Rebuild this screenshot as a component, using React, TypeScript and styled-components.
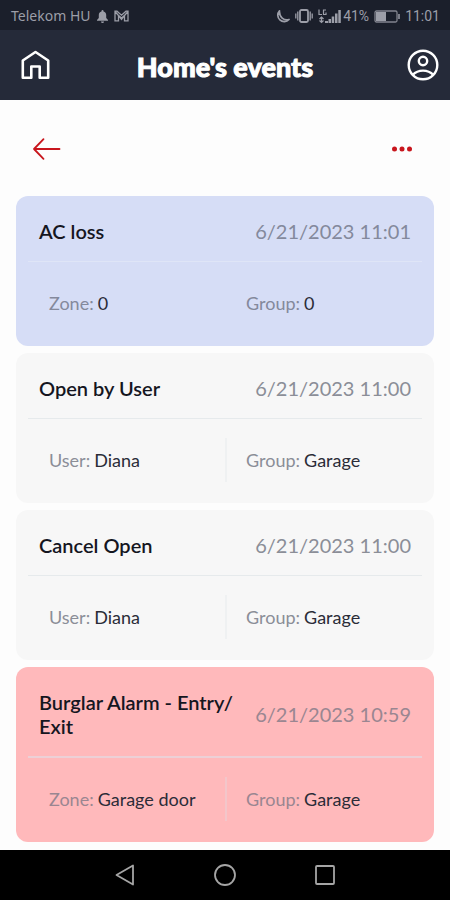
import React from 'react';
import styled, { createGlobalStyle } from 'styled-components';

const GlobalStyle = createGlobalStyle`
  *, *::before, *::after { box-sizing: border-box; }
  body {
    margin: 0;
    background: #fdfdfd;
    color: #15161f;
    font-family: Lato, sans-serif;
  }
  button {
    display: flex;
    margin: 0;
    padding: 0;
    border: 0;
    background: none;
    color: inherit;
    font: inherit;
    cursor: pointer;
  }
  svg { display: block; flex: none; }
`;

type Tone = 'info' | 'plain' | 'alarm';

const tones: Record<Tone, { background: string; rule: string; divider: string; label: string }> = {
  info: { background: '#d6ddf6', rule: '#dfe5f7', divider: 'transparent', label: '#84899c' },
  plain: { background: '#f7f7f7', rule: '#e6eaec', divider: '#eff1f2', label: '#8b8e97' },
  alarm: { background: '#ffb9bb', rule: '#ecd0d6', divider: '#f3c6ca', label: '#9a8691' },
};

const Screen = styled.div`
  display: flex;
  flex-direction: column;
  min-height: 100vh;
`;

const StatusBar = styled.div`
  display: flex;
  align-items: center;
  justify-content: space-between;
  height: 30px;
  padding: 2px 10px 0 11px;
  background: #1b1f2b;
  color: #9c9ea8;
  font-family: Roboto, sans-serif;
  font-size: 14px;
  line-height: 20px;
`;

const Carrier = styled.div`
  display: flex;
  align-items: center;
  gap: 6px;
  font-family: "Noto Sans", sans-serif;
`;

const Indicators = styled.div`
  display: flex;
  align-items: center;
  gap: 5px;
`;

const Signal = styled.div`
  display: flex;
  align-items: center;
  gap: 2px;
`;

const AppBar = styled.header`
  display: grid;
  grid-template-columns: 42px 1fr 42px;
  align-items: center;
  justify-items: end;
  height: 70px;
  padding: 0 10px;
  background: #252a39;
  color: #fff;
`;

const AppTitle = styled.h1`
  justify-self: center;
  margin: 0;
  padding-top: 3px;
  font-size: 27px;
  font-weight: 900;
  line-height: 32px;
  -webkit-text-stroke: 1px currentColor;
`;

const Main = styled.main`
  flex: 1;
  padding: 0 16px 8px;
`;

const Toolbar = styled.div`
  display: flex;
  align-items: center;
  justify-content: space-between;
  height: 96px;
  padding: 2px 21px 0 16px;
  color: #c8161d;
`;

const EventList = styled.ul`
  display: flex;
  flex-direction: column;
  gap: 7px;
  margin: 0;
  padding: 0;
  list-style: none;
`;

const EventCard = styled.li<{ $tone: Tone }>`
  padding: 0 12px;
  border-radius: 12px;
  background: ${({ $tone }) => tones[$tone].background};
`;

const EventHead = styled.div<{ $tone: Tone }>`
  display: flex;
  align-items: center;
  justify-content: space-between;
  gap: 16px;
  padding: 23px 11px 18px;
  border-bottom: ${({ $tone }) => ($tone === 'alarm' ? 2 : 1)}px solid ${({ $tone }) => tones[$tone].rule};
`;

const EventTitle = styled.h2`
  margin: 0;
  font-size: 20px;
  font-weight: 600;
  line-height: 24px;
`;

const EventTime = styled.time<{ $tone: Tone }>`
  flex: none;
  color: ${({ $tone }) => tones[$tone].label};
  font-size: 20px;
  line-height: 24px;
`;

const Details = styled.dl`
  display: grid;
  grid-template-columns: 1fr 1fr;
  align-items: center;
  height: 84px;
  margin: 0;
  padding-bottom: 2px;
`;

const Detail = styled.div<{ $tone: Tone; $divided?: boolean }>`
  display: flex;
  align-items: center;
  gap: 4px;
  height: 44px;
  padding-left: 19px;
  border-left: 2px solid ${({ $tone, $divided }) => ($divided ? tones[$tone].divider : 'transparent')};
  font-size: 18px;
  line-height: 24px;

  dt { color: ${({ $tone }) => tones[$tone].label}; }
  dd { margin: 0; color: #2b2c38; }
`;

const NavBar = styled.nav`
  display: flex;
  align-items: center;
  justify-content: center;
  gap: 76px;
  height: 50px;
  background: #000;
  color: #a5a5a5;
`;

interface AlarmEvent {
  title: string;
  time: string;
  source: [string, string];
  group: string;
  tone: Tone;
}

const events: AlarmEvent[] = [
  { title: 'AC loss', time: '6/21/2023 11:01', source: ['Zone', '0'], group: '0', tone: 'info' },
  { title: 'Open by User', time: '6/21/2023 11:00', source: ['User', 'Diana'], group: 'Garage', tone: 'plain' },
  { title: 'Cancel Open', time: '6/21/2023 11:00', source: ['User', 'Diana'], group: 'Garage', tone: 'plain' },
  { title: 'Burglar Alarm - Entry/\u200bExit', time: '6/21/2023 10:59', source: ['Zone', 'Garage door'], group: 'Garage', tone: 'alarm' },
];

const BellIcon = () => (
  <svg width="11" height="13" viewBox="0 0 11 13" fill="currentColor">
    <path d="M5.500 0a1 1 0 0 1 1 1v.5C8.300 2 9.200 3.300 9.200 5v3L11 10v.8H0V10l1.800-2V5c0-1.700.9-3 2.700-3.500V1a1 1 0 0 1 1-1zM4 11.500h3a1.500 1.500 0 0 1-3 0z" />
  </svg>
);

const MailIcon = () => (
  <svg width="15" height="12" viewBox="0 0 15 12" fill="none" stroke="currentColor" strokeWidth="1.300">
    <path d="M4.500 10.800H1V1.200h2l4.500 4 4.500-4h2v9.600h-3.500V5.500L7.500 8 4.500 5.500zM1 1.500l3.500 4M14 1.500l-3.500 4M4.500 5.500l3 4 3-4" />
  </svg>
);

const MoonIcon = () => (
  <svg width="15" height="15" viewBox="0 0 15 15" fill="none" stroke="currentColor" strokeWidth="1.700" strokeLinejoin="round">
    <path d="M4.500 1.800A6.300 6.300 0 1 0 14 10.500C9 12 4 8 4.500 1.800z" />
  </svg>
);

const VibrateIcon = () => (
  <svg width="18" height="14" viewBox="0 0 18 14" fill="none" stroke="currentColor" strokeWidth="1.800">
    <rect x="5" y="1" width="8" height="12" rx="1.500" />
    <path d="M2.800 2.500v9M15.200 2.500v9M.8 4.500v5M17.200 4.500v5" strokeWidth="1.300" />
  </svg>
);

const SignalIcon = () => (
  <svg width="23" height="15" viewBox="0 0 23 15" fill="currentColor">
    <path d="M7 12h3v2H7zM10.500 10h2.500v4h-2.500zM13.700 7.500h2.500V14h-2.500zM17 4.500h2.500V14H17zM20.300 1h2.500v13h-2.500z" />
    <path d="M1 .5v5h3M8 1H5.500v4.500H8V3.500M3.500 8v5M1.500 10l2-2 2 2M1.500 11.500l2 2 2-2" fill="none" stroke="currentColor" strokeWidth="1.200" />
  </svg>
);

const BatteryIcon = () => (
  <svg width="26" height="13" viewBox="0 0 26 13" fill="none" stroke="currentColor" strokeWidth="1.300">
    <rect x="1" y="1" width="22" height="11" rx="1.500" strokeOpacity="0.8" />
    <path d="M2 2h10v9H2z" fill="currentColor" stroke="none" />
    <path d="M25 4v5" strokeWidth="1.500" />
  </svg>
);

const HomeIcon = () => (
  <svg width="34" height="34" viewBox="0 0 34 34" fill="none" stroke="currentColor" strokeWidth="2.600" strokeLinejoin="round">
    <path d="M4.800 12.500 17.500 4l12.700 8.500v17.200h-8.500V18.500h-8.400v11.200H4.800z" />
  </svg>
);

const AccountIcon = () => (
  <svg width="34" height="34" viewBox="0 0 34 34" fill="none" stroke="currentColor" strokeWidth="2.400">
    <circle cx="17" cy="17" r="14.300" />
    <circle cx="17" cy="13" r="4.200" />
    <path d="M6.800 26.800c2.600-2.800 6.200-4.200 10.200-4.200s7.600 1.400 10.200 4.200" />
  </svg>
);

const BackIcon = () => (
  <svg width="30" height="24" viewBox="0 0 30 24" fill="none" stroke="currentColor" strokeWidth="1.800" strokeLinecap="round" strokeLinejoin="round">
    <path d="M27.500 12H2M11.500 2.200 2 12l9.500 9.800" />
  </svg>
);

const MoreIcon = () => (
  <svg width="22" height="8" viewBox="0 0 22 8" fill="currentColor">
    <circle cx="3.500" cy="4" r="2.500" />
    <circle cx="11" cy="4" r="2.500" />
    <circle cx="18.500" cy="4" r="2.500" />
  </svg>
);

const NavIcon = ({ children }: { children: React.ReactNode }) => (
  <svg width="24" height="24" viewBox="0 0 24 24" fill="none" stroke="currentColor" strokeWidth="1.800" strokeLinejoin="round">
    {children}
  </svg>
);

export default function App() {
  return (
    <Screen>
      <GlobalStyle />
      <StatusBar>
        <Carrier>
          <span>Telekom HU</span>
          <BellIcon />
          <MailIcon />
        </Carrier>
        <Indicators>
          <MoonIcon />
          <VibrateIcon />
          <Signal>
            <SignalIcon />
            <span>41%</span>
          </Signal>
          <BatteryIcon />
          <span>11:01</span>
        </Indicators>
      </StatusBar>
      <AppBar>
        <button type="button" aria-label="Home"><HomeIcon /></button>
        <AppTitle>Home's events</AppTitle>
        <button type="button" aria-label="Account"><AccountIcon /></button>
      </AppBar>
      <Main>
        <Toolbar>
          <button type="button" aria-label="Back"><BackIcon /></button>
          <button type="button" aria-label="More options"><MoreIcon /></button>
        </Toolbar>
        <EventList>
          {events.map(({ title, time, source, group, tone }, index) => (
            <EventCard key={index} $tone={tone}>
              <EventHead $tone={tone}>
                <EventTitle>{title}</EventTitle>
                <EventTime $tone={tone}>{time}</EventTime>
              </EventHead>
              <Details>
                <Detail $tone={tone}>
                  <dt>{source[0]}:</dt>
                  <dd>{source[1]}</dd>
                </Detail>
                <Detail $tone={tone} $divided>
                  <dt>Group:</dt>
                  <dd>{group}</dd>
                </Detail>
              </Details>
            </EventCard>
          ))}
        </EventList>
      </Main>
      <NavBar>
        <button type="button" aria-label="System back"><NavIcon><path d="M20 2.500v19L3.500 12z" /></NavIcon></button>
        <button type="button" aria-label="System home"><NavIcon><circle cx="12" cy="12" r="10" /></NavIcon></button>
        <button type="button" aria-label="Recent apps"><NavIcon><rect x="3" y="3" width="18" height="18" rx="1" /></NavIcon></button>
      </NavBar>
    </Screen>
  );
}
